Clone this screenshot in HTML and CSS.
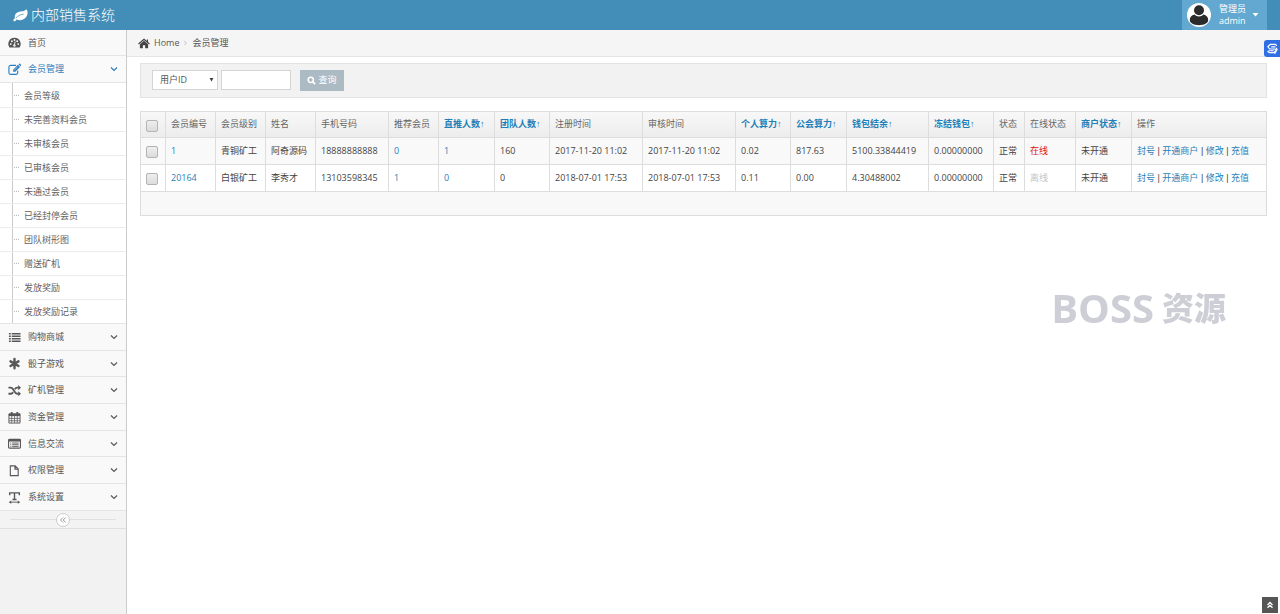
FILE: index.html
```html
<!DOCTYPE html>
<html lang="zh-CN">
<head>
<meta charset="utf-8">
<title>内部销售系统</title>
<link rel="stylesheet" href="styles.css">
</head>
<body>
<svg class="sprite" aria-hidden="true">
  <symbol id="chev" viewBox="0 0 8 8"><path d="M1 2.500l3 3 3-3" fill="none" stroke="currentColor" stroke-width="1.200"/></symbol>
</svg>
<header class="topbar">
  <a class="brand" href="#">
    <svg class="leaf" viewBox="0 0 16 14"><path d="M15.600 3.200C15.400 1.600 14.800.6 14.200.6c-.6 0-1 .8-2 1.300-1.600.8-3.600.5-5.600 1C3.700 3.600 1.800 5.700 1.800 8c0 .6.100 1.100.3 1.700C1.300 10.500.3 11.300.3 12c0 .6.7 1.300 1.300 1.300.8 0 1.500-1.400 2.200-2.100 1.300.7 2.800 1 4.300.8 4.600-.5 7.900-4.300 7.500-8.800z" fill="#fff"/><path d="M3.300 9.600C5 7.400 7.400 6 11 5.500" fill="none" stroke="#438eb9" stroke-width=".8" stroke-linecap="round"/></svg>
    <span>内部销售系统</span>
  </a>
  <button class="user" type="button">
    <svg class="avatar" viewBox="0 0 24 24"><circle cx="12" cy="12" r="12" fill="#fff"/><circle cx="12" cy="7.300" r="5" fill="#2b2b2b"/><path d="M7.500 11.500c1.100 1.300 2.700 2 4.500 2s3.400-.7 4.500-2c3 .6 4.700 2.800 4.700 5.500 0 3.300-4.200 5.200-9.200 5.200S2.800 20.300 2.800 17c0-2.700 1.700-4.900 4.700-5.500z" fill="#2b2b2b"/></svg>
    <span class="user-name"><span>管理员</span><span>admin</span></span>
    <svg class="caret" viewBox="0 0 6 4"><path d="M0 0h6L3 3.500z" fill="#fff"/></svg>
  </button>
</header>
<div class="layout">
  <nav class="sidebar">
    <ul class="menu">
      <li><a class="item" href="#"><svg class="ico" viewBox="0 0 14 14"><path d="M7 2a6.500 6.500 0 0 0-5.400 10.300h10.800A6.500 6.500 0 0 0 7 2z" fill="#555"/><g fill="#f8f8f8"><circle cx="3" cy="8.700" r="1"/><circle cx="4.200" cy="5.700" r="1"/><circle cx="7" cy="4.300" r="1"/><circle cx="9.900" cy="5.700" r="1"/><circle cx="11" cy="8.700" r="1"/></g><path d="M7.700 6l-.8 3.500" stroke="#f8f8f8"/><circle cx="6.900" cy="10.200" r="1.300" fill="#f8f8f8"/></svg><span>首页</span></a></li>
      <li>
        <a class="item open" href="#"><svg class="ico" viewBox="0 0 14 14"><path d="M10.500 8.200v2.300a1.800 1.800 0 0 1-1.800 1.800H2.800A1.800 1.800 0 0 1 1 10.500V4.300a1.800 1.800 0 0 1 1.800-1.800h5.900" fill="none" stroke="currentColor" stroke-width="1.200"/><path d="M5.500 9.500V7.300L10.700 2 13 4.300 7.800 9.500z" fill="currentColor"/><path d="M11.300 1.400l.7-.6a.8.800 0 0 1 1 0l1 1.100a.8.800 0 0 1 0 1l-.5.7z" fill="currentColor"/><path d="M6.500 8l4-4" stroke="#fafafa" stroke-width=".6"/></svg><span>会员管理</span><svg class="chev"><use href="#chev"/></svg></a>
        <ul class="submenu">
          <li><a href="#">会员等级</a></li>
          <li><a href="#">未完善资料会员</a></li>
          <li><a href="#">未审核会员</a></li>
          <li><a href="#">已审核会员</a></li>
          <li><a href="#">未通过会员</a></li>
          <li><a href="#">已经封停会员</a></li>
          <li><a href="#">团队树形图</a></li>
          <li><a href="#">赠送矿机</a></li>
          <li><a href="#">发放奖励</a></li>
          <li><a href="#">发放奖励记录</a></li>
        </ul>
      </li>
      <li><a class="item" href="#"><svg class="ico" viewBox="0 0 14 14"><path d="M1 3h2M4 3h9.500M1 5.700h2M4 5.700h9.500M1 8.400h2M4 8.400h9.500M1 11.100h2M4 11.100h9.500" stroke="currentColor" stroke-width="1.600"/></svg><span>购物商城</span><svg class="chev"><use href="#chev"/></svg></a></li>
      <li><a class="item" href="#"><svg class="ico" viewBox="0 0 14 14"><path d="M7 2.200v10M2.700 4.700l8.600 5M2.700 9.700l8.600-5" stroke="currentColor" stroke-width="2.600" stroke-linecap="round"/></svg><span>骰子游戏</span><svg class="chev"><use href="#chev"/></svg></a></li>
      <li><a class="item" href="#"><svg class="ico" viewBox="0 0 14 14"><path d="M.5 4H3c3.500 0 3.500 6.500 7 6.500h1.500M.5 10.500H3c1.200 0 2-.7 2.600-1.600M7.300 5.700C7.900 4.700 8.700 4 10 4h1.500" fill="none" stroke="currentColor" stroke-width="1.900"/><path d="M11 1.200L14 4l-3 2.800zM11 7.700l3 2.800-3 2.800z" fill="currentColor"/></svg><span>矿机管理</span><svg class="chev"><use href="#chev"/></svg></a></li>
      <li><a class="item" href="#"><svg class="ico" viewBox="0 0 14 14"><path d="M1 3h12v10H1z" fill="none" stroke="currentColor"/><path d="M1 3h12v2.500H1z" fill="currentColor"/><path d="M1 8h12M1 10.500h12M4 5v8M7 5v8M10 5v8" stroke="currentColor" stroke-width=".8"/><path d="M4 1v3M10 1v3" stroke="currentColor" stroke-width="2"/></svg><span>资金管理</span><svg class="chev"><use href="#chev"/></svg></a></li>
      <li><a class="item" href="#"><svg class="ico" viewBox="0 0 14 14"><rect x=".6" y="2.500" width="12.800" height="9.500" rx="1" fill="none" stroke="currentColor" stroke-width="1.200"/><path d="M.6 2.500h12.800v2.400H.6z" fill="currentColor"/><path d="M2.500 6.500h1M4.500 6.500h7M2.500 8.300h1M4.500 8.300h7M2.500 10.100h1M4.500 10.100h7" stroke="currentColor"/></svg><span>信息交流</span><svg class="chev"><use href="#chev"/></svg></a></li>
      <li><a class="item" href="#"><svg class="ico" viewBox="0 0 14 14"><path d="M2.500 2h5.200L11 5.300V12.500H2.500zM7.500 2v3.500H11" fill="none" stroke="currentColor" stroke-width="1.200"/></svg><span>权限管理</span><svg class="chev"><use href="#chev"/></svg></a></li>
      <li><a class="item" href="#"><svg class="ico" viewBox="0 0 14 14"><path d="M1.800 4.500V2h10.400v2.500M7 2v7M4.800 9.200h4.400" fill="none" stroke="currentColor" stroke-width="1.500"/><path d="M2.500 12h9" stroke="currentColor"/><path d="M.8 12l2.700-1.800v3.600zM13.200 12l-2.700-1.800v3.600z" fill="currentColor"/></svg><span>系统设置</span><svg class="chev"><use href="#chev"/></svg></a></li>
    </ul>
    <div class="collapse"><button type="button" aria-label="收起"><svg viewBox="0 0 8 8"><path d="M4 1.500L1.500 4 4 6.500M6.700 1.500L4.200 4l2.500 2.500" fill="none" stroke="#999"/></svg></button></div>
  </nav>
  <main class="main">
    <div class="crumbs">
      <svg class="home" viewBox="0 0 14 12"><path d="M7 2.800l4.800 4V11.500H8.300V8H5.700v3.500H2.200V6.800z" fill="currentColor"/><path d="M.6 6.500L7 1.200l6.400 5.300M11 1.200v3" fill="none" stroke="currentColor" stroke-width="1.400"/></svg>
      <a class="home-link" href="#">Home</a>
      <svg class="sep" viewBox="0 0 6 8"><path d="M1.500 1.500L4 4 1.500 6.500" fill="none" stroke="#b2b6bf"/></svg>
      <span>会员管理</span>
    </div>
    <div class="content">
      <form class="filter">
        <span class="select-box">
          <select aria-label="查询条件"><option>用户ID</option></select>
          <svg class="arrow" viewBox="0 0 6 5"><path d="M.5 0h5L3 4.500z" fill="#444"/></svg>
        </span>
        <input class="keyword" type="text" aria-label="关键字">
        <button class="search" type="button"><svg viewBox="0 0 10 10"><circle cx="4.200" cy="4.200" r="2.900" fill="none" stroke="#fff" stroke-width="1.700"/><path d="M6.300 6.300l2.700 2.700" stroke="#fff" stroke-width="2"/></svg><span>查询</span></button>
      </form>
      <table class="grid">
        <colgroup><col class="w25"><col class="w50"><col class="w50"><col class="w50"><col class="w73"><col class="w50"><col class="w56"><col class="w55"><col class="w93"><col class="w93"><col class="w55"><col class="w56"><col class="w82"><col class="w65"><col class="w31"><col class="w51"><col class="w56"><col></colgroup>
        <thead>
          <tr>
            <th><input class="tick" type="checkbox" aria-label="全选"></th><th>会员编号</th><th>会员级别</th><th>姓名</th><th>手机号码</th><th>推荐会员</th>
            <th><a class="sort" href="#">直推人数<i>↑</i></a></th><th><a class="sort" href="#">团队人数<i>↑</i></a></th><th>注册时间</th><th>审核时间</th>
            <th><a class="sort" href="#">个人算力<i>↑</i></a></th><th><a class="sort" href="#">公会算力<i>↑</i></a></th><th><a class="sort" href="#">钱包结余<i>↑</i></a></th><th><a class="sort" href="#">冻结钱包<i>↑</i></a></th>
            <th>状态</th><th>在线状态</th><th><a class="sort" href="#">商户状态<i>↑</i></a></th><th>操作</th>
          </tr>
        </thead>
        <tbody>
          <tr class="odd">
            <td><input class="tick" type="checkbox" aria-label="选择 1"></td><td><a href="#">1</a></td><td>青铜矿工</td><td>阿奇源码</td><td>18888888888</td><td><a href="#">0</a></td><td><a href="#">1</a></td><td>160</td><td>2017-11-20 11:02</td><td>2017-11-20 11:02</td><td>0.02</td><td>817.63</td><td>5100.33844419</td><td>0.00000000</td><td>正常</td><td class="on">在线</td><td>未开通</td>
            <td class="actions"><a href="#">封号</a> | <a href="#">开通商户</a> | <a href="#">修改</a> | <a href="#">充值</a></td>
          </tr>
          <tr>
            <td><input class="tick" type="checkbox" aria-label="选择 20164"></td><td><a href="#">20164</a></td><td>白银矿工</td><td>李秀才</td><td>13103598345</td><td><a href="#">1</a></td><td><a href="#">0</a></td><td>0</td><td>2018-07-01 17:53</td><td>2018-07-01 17:53</td><td>0.11</td><td>0.00</td><td>4.30488002</td><td>0.00000000</td><td>正常</td><td class="off">离线</td><td>未开通</td>
            <td class="actions"><a href="#">封号</a> | <a href="#">开通商户</a> | <a href="#">修改</a> | <a href="#">充值</a></td>
          </tr>
        </tbody>
      </table>
      <div class="pager"></div>
    </div>
  </main>
</div>
<div class="watermark">BOSS <span>资源</span></div>
<button class="ime" type="button" aria-label="输入法"><svg viewBox="0 0 16 16"><path d="M13.500 4.500L12 2.800H6L3.300 5.300 5.200 8h6.300l1 1.500-2.200 2.700H5l-2.200-1.700M12.800 6.700l1 1.800-2.800 5M7 5.500h5M4 10h6" fill="none" stroke="#fff" stroke-width="1.400"/></svg></button>
<button class="totop" type="button" aria-label="返回顶部"><svg viewBox="0 0 8 8"><path d="M1.500 4L4 1.500 6.500 4M1.500 6.800L4 4.300l2.500 2.500" fill="none" stroke="#fff" stroke-width="1.300"/></svg></button>
</body>
</html>
```
FILE: styles.css
```css
* { box-sizing: border-box; }
body {
  margin: 0;
  min-height: 100vh;
  display: flex;
  flex-direction: column;
  background: #fff;
  color: #444;
  font: 9px/14px "Open Sans", "Noto Sans CJK SC", sans-serif;
}
a { color: #1f7fb8; text-decoration: none; }
ul { margin: 0; padding: 0; list-style: none; }
button, input, select { font: inherit; margin: 0; }
button { border: 0; padding: 0; cursor: pointer; }
.sprite { position: absolute; width: 0; height: 0; }

.topbar {
  display: flex;
  justify-content: space-between;
  height: 30px;
  padding: 0 13px;
  background: #438eb9;
}
.brand { display: flex; align-items: center; gap: 3px; color: #fff; font-size: 14px; font-weight: 300; line-height: 30px; }
.leaf { width: 15px; height: 13px; }
.user { display: flex; align-items: center; padding: 0 8px 0 5px; background: #62a8d1; color: #fff; }
.avatar { width: 24px; height: 24px; }
.user-name { display: flex; flex-direction: column; padding: 0 6px 0 8px; line-height: 12px; text-align: left; }
.caret { width: 7px; height: 4px; }

.layout { flex: 1; display: flex; }
.sidebar { width: 127px; background: #f2f2f2; border-right: 1px solid #ccc; }
.menu > li { border-bottom: 1px solid #e5e5e5; }
.item { display: flex; align-items: center; height: 26px; padding: 0 8px; gap: 7px; background: #f9f9f9; color: #585858; }
.menu > li:nth-child(3n + 1) .item { height: 25px; }
.item span { flex: 1; }
.menu .item.open { height: 27px; color: #2b7dbc; background: #fafafa; border-bottom: 1px solid #e5e5e5; }
.ico { width: 13px; height: 13px; }
.chev { width: 8px; height: 8px; }
.submenu { padding-top: 1px; background: linear-gradient(#ccc, #ccc) 12px 0 / 1px 100% no-repeat #fff; }
.submenu li + li { border-top: 1px solid #ececec; }
.submenu a { display: flex; align-items: center; gap: 5px; height: 23px; padding-left: 14px; color: #616161; }
.submenu a::before { content: ""; width: 5px; border-top: 1px dotted #bbb; }
.collapse { display: flex; align-items: center; height: 18px; padding: 0 10px; background: #f3f3f3; border-bottom: 1px solid #e0e0e0; }
.collapse::before, .collapse::after { content: ""; flex: 1; border-top: 1px solid #e0e0e0; }
.collapse button { display: grid; place-items: center; width: 14px; height: 14px; border: 1px solid #ccc; border-radius: 50%; background: #fff; }
.collapse svg { width: 8px; height: 8px; }

.main { flex: 1; min-width: 0; }
.crumbs { display: flex; align-items: center; gap: 4px; height: 27px; padding: 0 11px; background: #f5f5f5; border-bottom: 1px solid #e5e5e5; color: #555; }
.home { width: 12px; height: 11px; color: #444; }
.home-link { color: #555; }
.sep { width: 5px; height: 8px; }
.content { padding: 6px 13px; }
.filter { display: flex; align-items: center; gap: 3px; height: 35px; padding: 0 11px 1px; background: #f2f2f2; border: 1px solid #e3e3e3; }
.select-box { position: relative; display: flex; }
.select-box select { appearance: none; width: 66px; height: 20px; padding: 0 7px; border: 1px solid #d5d5d5; border-radius: 0; background: #fff; color: #555; }
.arrow { position: absolute; right: 4px; top: 8px; width: 5px; height: 4px; pointer-events: none; }
.keyword { width: 70px; height: 20px; padding: 0 4px; border: 1px solid #d5d5d5; }
.search { display: flex; align-items: center; justify-content: center; gap: 2px; width: 44px; height: 21px; margin-left: 6px; background: #abbac3; color: #fff; }
.search svg { width: 9px; height: 9px; }

.grid { width: 100%; margin-top: 13px; table-layout: fixed; border-collapse: collapse; border: 1px solid #ddd; }
.grid th, .grid td { height: 27px; padding: 0 0 1px 5px; border: 1px solid #ddd; text-align: left; vertical-align: middle; white-space: nowrap; }
.grid th { height: 26px; color: #666; font-weight: 400; }
.grid thead tr { background: linear-gradient(#f8f8f8, #ececec); }
.grid .odd { background: #f9f9f9; }
.grid .sort { font-weight: 700; }
.sort i { font-family: "Liberation Sans", sans-serif; font-style: normal; }
.grid .on { color: #e01010; }
.grid .off { color: #c4c4c4; }
.grid .actions { font-family: "Liberation Sans", "Noto Sans CJK SC", sans-serif; }
.tick { appearance: none; display: block; width: 12px; height: 12px; margin-top: 3px; border: 1px solid #b4b4b4; border-radius: 2px; background: linear-gradient(#eee, #dcdcdc); }
.tick:checked { background: #62a8d1; }
.w25 { width: 25px; }
.w31 { width: 31px; }
.w50 { width: 50px; }
.w51 { width: 51px; }
.w55 { width: 55px; }
.w56 { width: 56px; }
.w65 { width: 65px; }
.w73 { width: 73px; }
.w82 { width: 82px; }
.w93 { width: 93px; }
.pager { height: 24px; background: #f8f8f8; border: 1px solid #ddd; border-top: 0; }

.watermark { position: fixed; right: 54px; bottom: 286px; display: flex; align-items: center; gap: 8px; color: #cdced6; font-size: 40px; font-weight: 700; line-height: 40px; }
.watermark span { font-size: 32px; font-weight: 900; }
.ime { position: fixed; right: 0; top: 40px; display: grid; place-items: center; width: 16px; height: 17px; border-radius: 3px 0 0 3px; background: #2f6fe4; }
.ime svg { width: 14px; height: 14px; }
.totop { position: fixed; right: 2px; bottom: 1px; display: grid; place-items: center; width: 16px; height: 16px; background: #555; }
.totop svg { width: 8px; height: 8px; }
```
